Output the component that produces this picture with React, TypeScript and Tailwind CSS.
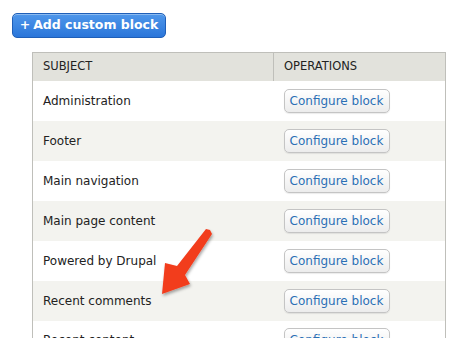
import React from 'react';

const rows = [
  'Administration',
  'Footer',
  'Main navigation',
  'Main page content',
  'Powered by Drupal',
  'Recent comments',
  'Recent content',
];

const font = { fontFamily: '"DejaVu Sans", "Lucida Grande", Verdana, sans-serif' };

function ConfigureButton() {
  return (
    <button className="h-[24px] w-[106px] rounded-[5px] border border-[#c4c4c4] bg-gradient-to-b from-white to-[#ececec] text-[12px] leading-none text-[#2a6fb5] shadow-[0_1px_1px_rgba(0,0,0,0.08)]">
      Configure block
    </button>
  );
}

export default function App() {
  return (
    <div className="relative h-[338px] w-[458px] overflow-hidden bg-white" style={font}>
      <div className="pl-[12px] pt-[13px]">
        <button className="flex h-[25px] w-[154px] items-center justify-center rounded-[5px] border border-[#1f5fb8] bg-gradient-to-b from-[#4f97ea] to-[#2a76da] text-[12.5px] font-bold leading-none text-white shadow-[inset_0_1px_0_rgba(255,255,255,0.35)]">
          <span className="mr-[3px]">+</span>Add custom block
        </button>
      </div>

      <table className="ml-[32px] mt-[14px] w-[414px] border-collapse border border-[#bfbfba] text-[12px] text-[#222]">
        <thead>
          <tr className="h-[28px] bg-[#e2e2dc] text-left">
            <th className="w-[241px] border-r border-[#bfbfba] pl-[10px] text-[11.5px] font-normal uppercase">Subject</th>
            <th className="pl-[10px] text-[11.5px] font-normal uppercase">Operations</th>
          </tr>
        </thead>
        <tbody>
          {rows.map((r, i) => (
            <tr key={r} className={`h-[40px] ${i % 2 === 1 ? 'bg-[#f3f3ef]' : 'bg-white'}`}>
              <td className="pl-[10px]">{r}</td>
              <td className="pl-[10px]">
                <ConfigureButton />
              </td>
            </tr>
          ))}
        </tbody>
      </table>

      <svg className="pointer-events-none absolute left-0 top-0" width="458" height="338">
        <defs>
          <filter id="sh" x="-30%" y="-30%" width="160%" height="160%">
            <feDropShadow dx="1" dy="2" stdDeviation="1.5" floodColor="#000" floodOpacity="0.35" />
          </filter>
        </defs>
        <polygon
          points="206,229 210,230 212,234 185,275 190,284 162,294 165,263 177,266"
          fill="#f23c1e"
          filter="url(#sh)"
        />
      </svg>
    </div>
  );
}
